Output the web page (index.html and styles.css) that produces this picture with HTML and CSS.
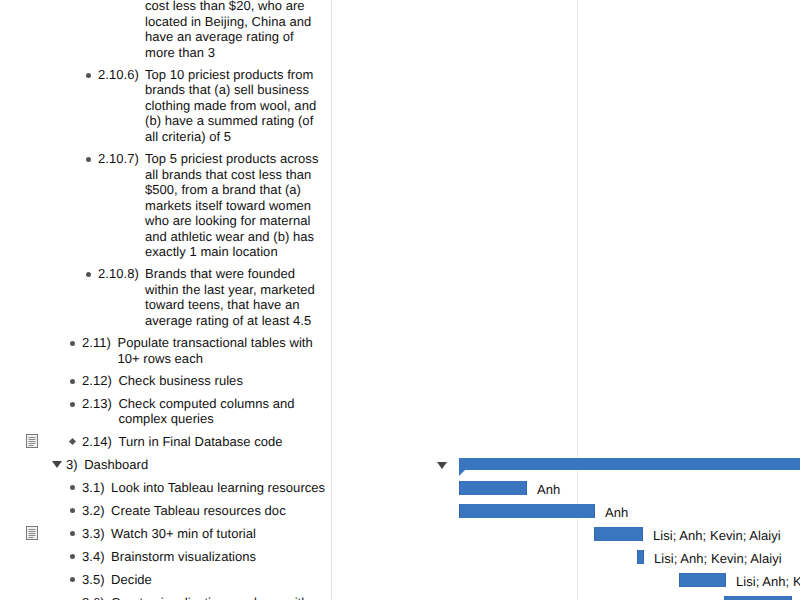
FILE: index.html
```html
<!DOCTYPE html>
<html lang="en">

<head>
    <meta charset="UTF-8">
    <meta name="viewport" content="width=device-width, initial-scale=1.0">
    <title>Project Plan</title>
    <link rel="stylesheet" href="styles.css">
</head>

<body>
    <main class="plan">
        <!-- Outline column -->
        <section class="outline">
            <div class="row level-3 cut-off">
                <span class="num"></span>
                <span class="task">cost less than $20, who are located in Beijing, China and have an average rating of more than 3</span>
            </div>
            <div class="row level-3">
                <span class="bullet"></span>
                <span class="num">2.10.6)</span>
                <span class="task">Top 10 priciest products from brands that (a) sell business clothing made from wool, and (b) have a summed rating (of all criteria) of 5</span>
            </div>
            <div class="row level-3">
                <span class="bullet"></span>
                <span class="num">2.10.7)</span>
                <span class="task">Top 5 priciest products across all brands that cost less than $500, from a brand that (a) markets itself toward women who are looking for maternal and athletic wear and (b) has exactly 1 main location</span>
            </div>
            <div class="row level-3">
                <span class="bullet"></span>
                <span class="num">2.10.8)</span>
                <span class="task">Brands that were founded within the last year, marketed toward teens, that have an average rating of at least 4.5</span>
            </div>
            <div class="row level-2">
                <span class="bullet"></span>
                <span class="num">2.11)</span>
                <span class="task">Populate transactional tables with 10+ rows each</span>
            </div>
            <div class="row level-2">
                <span class="bullet"></span>
                <span class="num">2.12)</span>
                <span class="task">Check business rules</span>
            </div>
            <div class="row level-2">
                <span class="bullet"></span>
                <span class="num">2.13)</span>
                <span class="task">Check computed columns and complex queries</span>
            </div>
            <div class="row level-2">
                <svg class="note" width="12" height="14" viewBox="0 0 12 14">
                    <rect x="0.5" y="0.5" width="11" height="13" fill="#f1f1f1" stroke="#777" />
                    <path d="M2.5 3.5h7M2.5 5.5h7M2.5 7.5h7M2.5 9.5h7M2.5 11.5h5" stroke="#888" />
                </svg>
                <span class="bullet diamond"></span>
                <span class="num">2.14)</span>
                <span class="task">Turn in Final Database code</span>
            </div>
            <div class="row level-1">
                <span class="arrow"></span>
                <span class="num">3)</span>
                <span class="task">Dashboard</span>
            </div>
            <div class="row level-2">
                <span class="bullet"></span>
                <span class="num">3.1)</span>
                <span class="task">Look into Tableau learning resources</span>
            </div>
            <div class="row level-2">
                <span class="bullet"></span>
                <span class="num">3.2)</span>
                <span class="task">Create Tableau resources doc</span>
            </div>
            <div class="row level-2">
                <svg class="note" width="12" height="14" viewBox="0 0 12 14">
                    <rect x="0.5" y="0.5" width="11" height="13" fill="#f1f1f1" stroke="#777" />
                    <path d="M2.5 3.5h7M2.5 5.5h7M2.5 7.5h7M2.5 9.5h7M2.5 11.5h5" stroke="#888" />
                </svg>
                <span class="bullet"></span>
                <span class="num">3.3)</span>
                <span class="task">Watch 30+ min of tutorial</span>
            </div>
            <div class="row level-2">
                <span class="bullet"></span>
                <span class="num">3.4)</span>
                <span class="task">Brainstorm visualizations</span>
            </div>
            <div class="row level-2">
                <span class="bullet"></span>
                <span class="num">3.5)</span>
                <span class="task">Decide</span>
            </div>
            <div class="row level-2">
                <span class="bullet"></span>
                <span class="num">3.6)</span>
                <span class="task">Create visualization mockups with</span>
            </div>
        </section>

        <!-- Gantt column -->
        <section class="gantt">
            <div class="gridline"></div>
            <div class="g-row">
                <span class="g-arrow"></span>
                <div class="summary-bar"></div>
            </div>
            <div class="g-row">
                <div class="bar" style="margin-left: 127px; width: 68px"></div>
                <span class="who">Anh</span>
            </div>
            <div class="g-row">
                <div class="bar" style="margin-left: 127px; width: 136px"></div>
                <span class="who">Anh</span>
            </div>
            <div class="g-row">
                <div class="bar" style="margin-left: 262px; width: 49px"></div>
                <span class="who">Lisi; Anh; Kevin; Alaiyi</span>
            </div>
            <div class="g-row">
                <div class="bar" style="margin-left: 305px; width: 7px"></div>
                <span class="who">Lisi; Anh; Kevin; Alaiyi</span>
            </div>
            <div class="g-row">
                <div class="bar" style="margin-left: 347px; width: 47px"></div>
                <span class="who">Lisi; Anh; Kevin; Alaiyi</span>
            </div>
            <div class="g-row">
                <div class="bar" style="margin-left: 392px; width: 68px"></div>
            </div>
        </section>
    </main>
</body>

</html>
```

FILE: styles.css
```css
html,
body {
    margin: 0;
    padding: 0;
    height: 600px;
    overflow: hidden;
    background-color: #fff;
}

body {
    font-family: "Liberation Sans", Arial, sans-serif;
    font-size: 13px;
    letter-spacing: 0.05px;
    color: #111;
    text-rendering: geometricPrecision;
}

.plan {
    display: flex;
    height: 600px;
    overflow: hidden;
}

/* Outline column */
.outline {
    flex: none;
    box-sizing: border-box;
    border-right: 1px solid #dedede;
    width: 332px;
    padding-right: 5px;
}

.row {
    display: flex;
    position: relative;
    box-sizing: border-box;
    min-height: 23px;
    padding: 3.375px 0;
    line-height: 15.5px;
}

.cut-off {
    margin-top: -5.25px;
}

.level-1 {
    padding-left: 66px;
}

.level-2 {
    padding-left: 82px;
}

.level-3 {
    padding-left: 98px;
}

.num {
    flex: none;
    margin-right: 6.5px;
}

.level-3 .num {
    width: 40.5px;
}

.task {
    flex: 1;
}

.bullet {
    position: absolute;
    top: 9px;
    width: 5px;
    height: 5px;
    margin-left: -12px;
    border-radius: 50%;
    background-color: #555;
}

.diamond {
    border-radius: 0;
    transform: rotate(45deg);
}

.arrow {
    position: absolute;
    left: 52px;
    top: 8px;
    border-left: 5px solid transparent;
    border-right: 5px solid transparent;
    border-top: 7px solid #444;
}

.note {
    position: absolute;
    left: 26px;
    top: 4px;
}

/* Gantt column */
.gantt {
    flex: 1;
    position: relative;
    padding-top: 458px;
}

.gridline {
    position: absolute;
    left: 245px;
    top: 0;
    bottom: 0;
    width: 1px;
    background-color: #e6e6e6;
}

.g-row {
    display: flex;
    position: relative;
    height: 23px;
}

.bar {
    flex: none;
    height: 14px;
    background-color: #3a75bf;
    box-shadow: inset 1px 0 0 #3068ad, inset -1px 0 0 #3068ad;
}

.who {
    margin-left: 10px;
    line-height: 15.5px;
    margin-top: 1px;
    white-space: nowrap;
}

.g-arrow {
    position: absolute;
    left: 105px;
    top: 4px;
    border-left: 5px solid transparent;
    border-right: 5px solid transparent;
    border-top: 7px solid #444;
}

.summary-bar {
    position: absolute;
    left: 127px;
    right: 0;
    top: 0;
    height: 12px;
    background-color: #3a75bf;
}

.summary-bar::after {
    content: "";
    position: absolute;
    left: 0;
    top: 12px;
    border-top: 6px solid #3a75bf;
    border-right: 6px solid transparent;
}
```
